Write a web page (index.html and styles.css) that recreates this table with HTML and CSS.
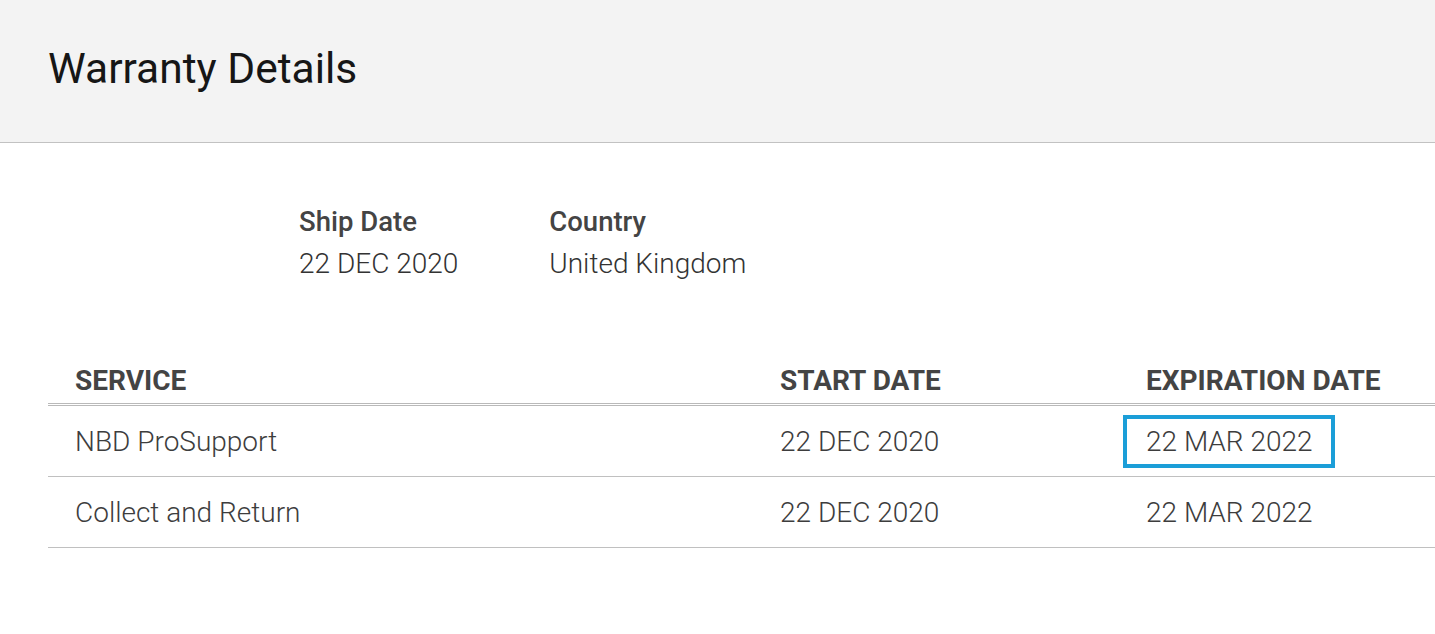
FILE: index.html
```html
<!DOCTYPE html>
<html lang="en">
<head>
<meta charset="utf-8">
<title>Warranty Details</title>
<link rel="stylesheet" href="styles.css">
</head>
<body>
<header class="page-header">
  <h1 class="page-title">Warranty Details</h1>
</header>
<main class="content">
  <section class="summary">
    <div class="summary-item">
      <div class="summary-label">Ship Date</div>
      <div class="summary-value">22 DEC 2020</div>
    </div>
    <div class="summary-item">
      <div class="summary-label">Country</div>
      <div class="summary-value">United Kingdom</div>
    </div>
  </section>
  <table class="warranty-table">
    <colgroup>
      <col class="col-service">
      <col class="col-start">
      <col class="col-exp">
    </colgroup>
    <thead>
      <tr>
        <th>SERVICE</th>
        <th>START DATE</th>
        <th>EXPIRATION DATE</th>
      </tr>
    </thead>
    <tbody>
      <tr>
        <td>NBD ProSupport</td>
        <td>22 DEC 2020</td>
        <td><span class="highlight">22 MAR 2022</span></td>
      </tr>
      <tr>
        <td>Collect and Return</td>
        <td>22 DEC 2020</td>
        <td>22 MAR 2022</td>
      </tr>
    </tbody>
  </table>
</main>
</body>
</html>
```
FILE: styles.css
```css
html, body {
  margin: 0;
  padding: 0;
  background: #ffffff;
  font-family: Roboto, "Liberation Sans", Arial, sans-serif;
  overflow: hidden;
}

.page-header {
  height: 142px;
  background: #f3f3f3;
  border-bottom: 1px solid #c2c2c2;
  display: flex;
  align-items: center;
  padding-left: 48px;
}

.page-title {
  margin: 0;
  font-size: 42.5px;
  font-weight: 400;
  color: #161616;
  line-height: 1;
  padding-bottom: 4px;
}

.content {
  padding-left: 48px;
}

.summary {
  display: flex;
  gap: 91px;
  margin-left: 251px;
  padding-top: 58px;
}

.summary-item {
  display: flex;
  flex-direction: column;
}

.summary-label {
  font-size: 27.5px;
  font-weight: 500;
  color: #444444;
  line-height: 42px;
}

.summary-value {
  font-size: 28px;
  font-weight: 300;
  color: #333333;
  line-height: 42px;
}

.warranty-table {
  margin-top: 68px;
  width: 100%;
  border-collapse: collapse;
  table-layout: fixed;
}

.col-service { width: 705px; }
.col-start { width: 366px; }

.warranty-table th {
  text-align: left;
  font-size: 28px;
  font-weight: 700;
  color: #444444;
  padding: 0 0 6px 27px;
  height: 44px;
  vertical-align: bottom;
  border-bottom: 3px double #b9b9b9;
  white-space: nowrap;
}

.warranty-table td {
  font-size: 28px;
  font-weight: 300;
  color: #3d3d3d;
  height: 70px;
  padding: 0 0 0 27px;
  border-bottom: 1px solid #c0c0c0;
  vertical-align: middle;
  white-space: nowrap;
}

.highlight {
  display: inline-block;
  margin-left: -23px;
  padding: 6px 18px 6px 19px;
  border: 4px solid #1b9ed8;
  line-height: 33px;
}
```
